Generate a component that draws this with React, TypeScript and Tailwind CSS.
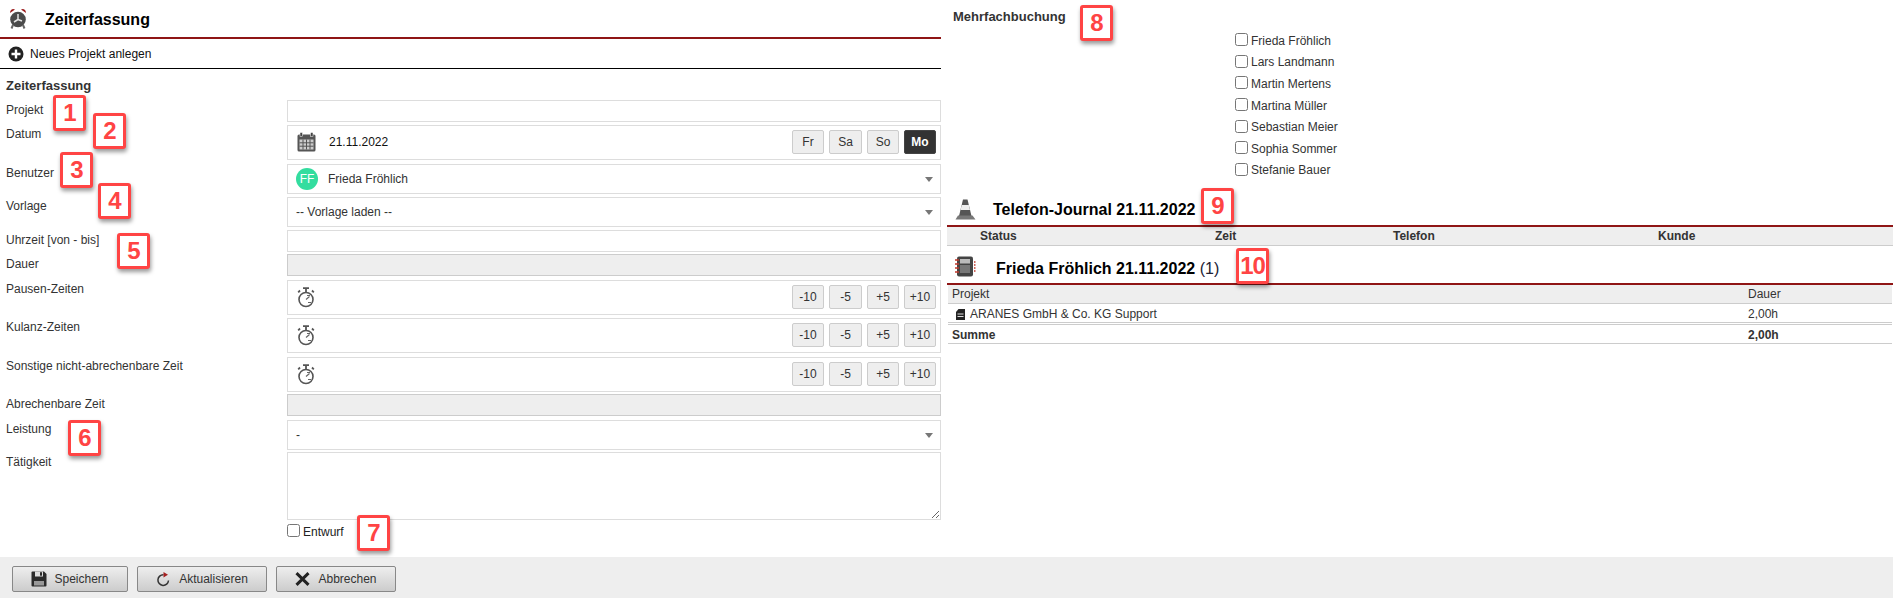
import React from 'react';

const AlarmIcon = () => (
  <svg width="18" height="21" viewBox="0 0 18 21" className="shrink-0">
    <path d="M1 5 C1 1.500 4 0 6 1.500 Z" fill="#9b1c1c" />
    <path d="M17 5 C17 1.500 14 0 12 1.500 Z" fill="#9b1c1c" />
    <circle cx="9" cy="11.500" r="7.800" fill="#4b4b4b" />
    <path d="M4 17 L2.500 20.500 M14 17 L15.500 20.500" stroke="#666" strokeWidth="2" />
    <path d="M9 6 V11.500 L5 14 M9 11.500 L13 13" stroke="#e5e5e5" strokeWidth="1.500" fill="none" />
  </svg>
);

const PlusCircle = () => (
  <svg width="16" height="16" viewBox="0 0 16 16" className="shrink-0">
    <circle cx="8" cy="8" r="7.500" fill="#222" />
    <path d="M8 3.500 V12.500 M3.500 8 H12.500" stroke="#fff" strokeWidth="2.400" />
  </svg>
);

const CalendarIcon = () => (
  <svg width="20" height="20" viewBox="0 0 20 20" className="-mt-px shrink-0">
    <rect x="0.500" y="2.500" width="18" height="17" rx="1.500" fill="#555" />
    <rect x="3" y="0.500" width="2.500" height="4" fill="#444" stroke="#fff" strokeWidth="0.500" />
    <rect x="13.500" y="0.500" width="2.500" height="4" fill="#444" stroke="#fff" strokeWidth="0.500" />
    <path d="M2.500 7.500 H16.500 V17.500 H2.500 Z" fill="#ccc" />
    <path d="M2.500 10.800 H16.500 M2.500 14.200 H16.500 M6 7.500 V17.500 M9.500 7.500 V17.500 M13 7.500 V17.500" stroke="#555" strokeWidth="1" />
  </svg>
);

const Stopwatch = () => (
  <svg width="18" height="21" viewBox="0 0 18 21" className="shrink-0">
    <circle cx="9" cy="12.500" r="7" fill="none" stroke="#555" strokeWidth="1.600" />
    <path d="M6 1.200 H12 M9 1.500 V5 M15 3.500 L16.800 5.300 M3 3.500 L1.200 5.300" stroke="#555" strokeWidth="1.800" />
    <path d="M9 12.500 L12.500 9.500 M10 8.500 H13 M11 15.500 H14" stroke="#666" strokeWidth="1.200" />
  </svg>
);

const CaretDown = () => (
  <span className="block h-0 w-0 shrink-0 border-x-[4px] border-t-[5px] border-x-transparent border-t-[#777]" />
);

const ConeIcon = () => (
  <svg width="21" height="21" viewBox="0 0 21 21" className="shrink-0">
    <path d="M8 0.500 H12.500 L16.500 17 H4 Z" fill="#555" />
    <path d="M6.800 6 H13.800 L15 11 H5.500 Z" fill="#eee" />
    <path d="M0.500 20.500 L3 16.500 H17.500 L20.500 20.500 Z" fill="#777" />
  </svg>
);

const NotebookIcon = () => (
  <svg width="21" height="21" viewBox="0 0 21 21" className="shrink-0">
    <rect x="2" y="0.500" width="16" height="20" rx="2" fill="#444" />
    <rect x="5" y="3" width="10" height="4.500" fill="#bbb" />
    <rect x="5" y="9" width="10" height="8" fill="#777" />
    <path d="M0 4 H4 M0 8 H4 M0 12 H4 M0 16 H4" stroke="#c0392b" strokeWidth="1.300" />
    <path d="M19 6 H20.500 M19 9 H20.500 M19 12 H20.500 M19 15 H20.500" stroke="#c0392b" strokeWidth="1.500" />
  </svg>
);

const BookIcon = () => (
  <svg width="9" height="11" viewBox="0 0 9 11" className="shrink-0">
    <path d="M2.500 0 H9 V11 H0 V3 Z" fill="#222" />
    <path d="M1.500 5 H7.500 M1.500 7.500 H7.500" stroke="#ddd" strokeWidth="1" />
  </svg>
);

const SaveIcon = () => (
  <svg width="16" height="16" viewBox="0 0 16 16" className="shrink-0">
    <path d="M0.500 1.500 Q0.500 0.500 1.500 0.500 H13 L15.500 3 V14.500 Q15.500 15.500 14.500 15.500 H1.500 Q0.500 15.500 0.500 14.500 Z" fill="#2b2b2b" />
    <rect x="4" y="0.500" width="8" height="5" fill="#ddd" />
    <rect x="9" y="1.200" width="2" height="3.500" fill="#2b2b2b" />
    <rect x="3" y="10" width="10" height="4.500" fill="#999" />
  </svg>
);

const RefreshIcon = () => (
  <svg width="14" height="15" viewBox="0 0 14 15" className="shrink-0">
    <path d="M7.500 2.800 A5.300 5.300 0 1 0 12.500 8.500" fill="none" stroke="#333" strokeWidth="1.500" />
    <path d="M7.500 0 L12 2.700 L7.500 5.400 Z" fill="#a52020" />
  </svg>
);

const CrossIcon = () => (
  <svg width="15" height="14" viewBox="0 0 15 14" className="shrink-0">
    <path d="M1.500 1.200 L13.500 12.800 M13.500 1.200 L1.500 12.800" stroke="#222" strokeWidth="3" />
  </svg>
);

const StepButton = ({ label, active, className }: { label: string; active?: boolean; className: string }) => (
  <button
    className={`flex h-[24px] items-center justify-center rounded-[2px] border text-[12px] ${className} ${
      active ? 'border-[#444] bg-[#333] font-bold text-white' : 'border-[#ccc] bg-[#eee] text-[#333]'
    }`}
  >
    {label}
  </button>
);

const ButtonRow = ({ labels, activeIndex }: { labels: string[]; activeIndex?: number }) => {
  const widths = ['w-[32px]', 'w-[33px]', 'w-[32px]', 'w-[32px]'];
  return (
    <div className="ml-auto -mt-px flex gap-[5px]">
      {labels.map((label, i) => (
        <StepButton key={label} label={label} active={i === activeIndex} className={widths[i]} />
      ))}
    </div>
  );
};

const Row = ({
  label,
  rowClass,
  fieldClass,
  low,
  children,
}: {
  label: string;
  rowClass: string;
  fieldClass: string;
  low?: boolean;
  children?: React.ReactNode;
}) => (
  <div className={`flex ${rowClass}`}>
    <div className={`w-[287px] shrink-0 pl-[6px] text-[12px] leading-[16px] text-[#333] ${low ? 'pt-[2px]' : 'pt-px'}`}>
      {label}
    </div>
    <div className={`flex w-[654px] items-center border ${fieldClass}`}>{children}</div>
  </div>
);

const Badge = ({ n, className }: { n: number; className: string }) => (
  <div
    className={`absolute flex h-[36px] w-[33px] items-center justify-center rounded-[3px] border-[3px] border-[#ff4444] bg-white text-[24px] font-bold tracking-[-1px] text-[#ff4444] shadow-[1px_3px_4px_rgba(0,0,0,0.4)] ${className}`}
  >
    {n}
  </div>
);

const steps = ['-10', '-5', '+5', '+10'];
const users = [
  'Frieda Fröhlich',
  'Lars Landmann',
  'Martin Mertens',
  'Martina Müller',
  'Sebastian Meier',
  'Sophia Sommer',
  'Stefanie Bauer',
];

export default function App() {
  return (
    <div className="relative h-[606px] w-[1893px] overflow-hidden bg-white font-['Liberation_Sans',Arial,sans-serif] text-[12px] text-[#333]">
      <div className="flex h-[557px]">
        {/* left: form */}
        <div className="w-[941px] shrink-0">
          <div className="flex h-[39px] items-start gap-[18px] border-b-2 border-[#8f1515] pl-[9px] pt-[8px]">
            <AlarmIcon />
            <h1 className="pt-[3px] text-[16px] font-bold leading-[18px] text-black">Zeiterfassung</h1>
          </div>
          <div className="flex h-[30px] items-center gap-[6px] border-b border-black pl-[8px] text-[#111]">
            <PlusCircle />
            <span>Neues Projekt anlegen</span>
          </div>
          <h2 className="h-[31px] pl-[6px] pt-[9px] text-[13px] font-bold leading-[16px]">Zeiterfassung</h2>

          <Row label="Projekt" low rowClass="mb-[3px]" fieldClass="h-[22px] border-[#ddd]" />
          <Row label="Datum" rowClass="mb-[4px]" fieldClass="h-[35px] border-[#ddd] pl-[9px] pr-[4px]">
            <CalendarIcon />
            <span className="-mt-px ml-[12px] text-[#111]">21.11.2022</span>
            <ButtonRow labels={['Fr', 'Sa', 'So', 'Mo']} activeIndex={3} />
          </Row>
          <Row label="Benutzer" rowClass="mb-[3px]" fieldClass="h-[30px] justify-between border-[#ddd] pl-[8px] pr-[7px]">
            <span className="flex items-center gap-[10px]">
              <span className="flex h-[22px] w-[22px] items-center justify-center rounded-full bg-[#33dd9f] text-[12px] text-white">
                FF
              </span>
              Frieda Fröhlich
            </span>
            <CaretDown />
          </Row>
          <Row label="Vorlage" rowClass="mb-[3px]" fieldClass="h-[30px] justify-between border-[#ddd] pl-[8px] pr-[7px]">
            <span>-- Vorlage laden --</span>
            <CaretDown />
          </Row>
          <Row label="Uhrzeit [von - bis]" low rowClass="mb-[2px]" fieldClass="h-[22px] border-[#ddd]" />
          <Row label="Dauer" low rowClass="mb-[4px]" fieldClass="h-[22px] border-[#ccc] bg-[#eee]" />
          <Row label="Pausen-Zeiten" rowClass="mb-[3px]" fieldClass="h-[35px] border-[#ddd] pl-[9px] pr-[4px]">
            <Stopwatch />
            <ButtonRow labels={steps} />
          </Row>
          <Row label="Kulanz-Zeiten" rowClass="mb-[4px]" fieldClass="h-[35px] border-[#ddd] pl-[9px] pr-[4px]">
            <Stopwatch />
            <ButtonRow labels={steps} />
          </Row>
          <Row label="Sonstige nicht-abrechenbare Zeit" rowClass="mb-[2px]" fieldClass="h-[35px] border-[#ddd] pl-[9px] pr-[4px]">
            <Stopwatch />
            <ButtonRow labels={steps} />
          </Row>
          <Row label="Abrechenbare Zeit" low rowClass="mb-[4px]" fieldClass="h-[22px] border-[#ccc] bg-[#eee]" />
          <Row label="Leistung" rowClass="mb-[2px]" fieldClass="h-[30px] justify-between border-[#ddd] pl-[8px] pr-[7px]">
            <span>-</span>
            <CaretDown />
          </Row>
          <div className="flex">
            <div className="w-[287px] shrink-0 pl-[6px] pt-[2px] leading-[16px]">Tätigkeit</div>
            <textarea className="block h-[68px] w-[654px] border border-[#ddd] outline-none" />
          </div>
          <label className="ml-[287px] mt-[4px] flex items-start gap-[3px] leading-[16px] text-[#222]">
            <input type="checkbox" />
            <span>Entwurf</span>
          </label>
        </div>

        {/* right: journal and bookings */}
        <div className="ml-[6px] min-w-0 flex-1">
          <h2 className="h-[30px] pl-[6px] pt-[9px] text-[13px] font-bold leading-[16px]">Mehrfachbuchung</h2>
          <div className="h-[159px] pl-[288px]">
            {users.map((name) => (
              <label key={name} className="flex h-[21.600px] items-center gap-[3px]">
                <input type="checkbox" className="-mt-[2px]" />
                <span>{name}</span>
              </label>
            ))}
          </div>

          <div className="flex h-[38px] items-center gap-[17px] border-b-2 border-[#8f1515] pl-[8px] pt-[4px]">
            <ConeIcon />
            <h2 className="pt-[2px] text-[16px] font-bold text-black">Telefon-Journal 21.11.2022</h2>
          </div>
          <div className="grid h-[19px] grid-cols-[268px_178px_265px_1fr] items-center border-b border-[#ccc] bg-[#eee] font-bold">
            <span className="pl-[33px]">Status</span>
            <span>Zeit</span>
            <span>Telefon</span>
            <span>Kunde</span>
          </div>

          <div className="flex h-[39px] items-center gap-[20px] border-b-2 border-[#8f1515] pl-[8px] pt-[4px]">
            <NotebookIcon />
            <h2 className="pt-[4px] text-[16px] text-[#223]">
              <span className="font-bold text-black">Frieda Fröhlich 21.11.2022</span> (1)
            </h2>
          </div>
          <div className="mx-px">
            <div className="grid h-[19px] grid-cols-[800px_1fr] items-center border-b border-[#ccc] bg-[#eee]">
              <span className="pl-[4px]">Projekt</span>
              <span>Dauer</span>
            </div>
            <div className="grid h-[19px] grid-cols-[800px_1fr] items-center border-b border-[#ccc] pt-px">
              <span className="flex items-center gap-[5px] pl-[8px]">
                <BookIcon />
                ARANES GmbH &amp; Co. KG Support
              </span>
              <span>2,00h</span>
            </div>
            <div className="mt-[1px] grid h-[20px] grid-cols-[800px_1fr] items-center border-y border-[#ccc] pt-px font-bold">
              <span className="pl-[4px]">Summe</span>
              <span>2,00h</span>
            </div>
          </div>
        </div>
      </div>

      {/* footer actions */}
      <div className="flex h-[41px] gap-[9px] bg-[#eee] pl-[12px] pt-[9px]">
        <button className="flex h-[26px] w-[116px] items-center justify-center gap-[7px] rounded-[2px] border border-[#888] bg-gradient-to-b from-[#eee] to-[#ccc] text-[12px]">
          <SaveIcon />
          Speichern
        </button>
        <button className="flex h-[26px] w-[130px] items-center justify-center gap-[9px] rounded-[2px] border border-[#888] bg-gradient-to-b from-[#eee] to-[#ccc] text-[12px]">
          <RefreshIcon />
          Aktualisieren
        </button>
        <button className="flex h-[26px] w-[120px] items-center justify-center gap-[8px] rounded-[2px] border border-[#888] bg-gradient-to-b from-[#eee] to-[#ccc] text-[12px]">
          <CrossIcon />
          Abbrechen
        </button>
      </div>

      {/* numbered callouts over the screenshot */}
      <Badge n={1} className="left-[53px] top-[95px]" />
      <Badge n={2} className="left-[93px] top-[113px]" />
      <Badge n={3} className="left-[60px] top-[152px]" />
      <Badge n={4} className="left-[98px] top-[183px]" />
      <Badge n={5} className="left-[117px] top-[233px]" />
      <Badge n={6} className="left-[68px] top-[420px]" />
      <Badge n={7} className="left-[357px] top-[515px]" />
      <Badge n={8} className="left-[1080px] top-[5px]" />
      <Badge n={9} className="left-[1201px] top-[188px]" />
      <Badge n={10} className="left-[1236px] top-[248px]" />
    </div>
  );
}
